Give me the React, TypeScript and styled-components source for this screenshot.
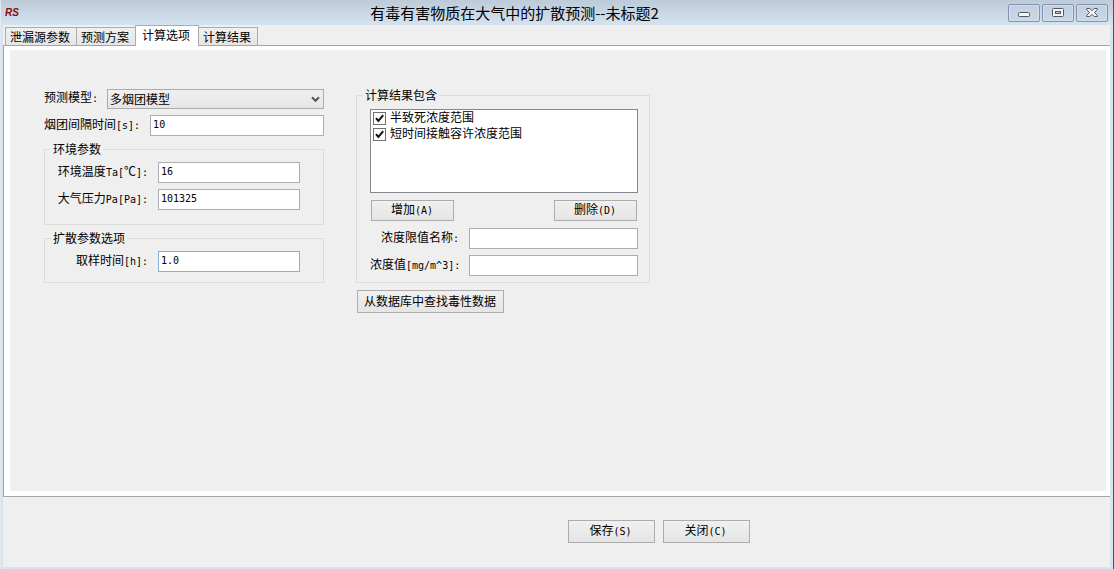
import React, { useState } from "react";
import styled, { createGlobalStyle } from "styled-components";

const GlobalStyle = createGlobalStyle`
  * { box-sizing: border-box; }
  body {
    margin: 0;
    color: #000;
    background: #efefef;
    font-family: "Noto Sans CJK SC", sans-serif;
    font-size: 12px;
    line-height: 14px;
  }
  button, input, select { font: inherit; color: inherit; margin: 0; }
`;

const Window = styled.div`
  display: flex;
  flex-direction: column;
  min-height: 100vh;
  background: #d6e4f1;
  border-right: 1px solid #505050;
  border-left: 1px solid #e4e9ef;
  padding: 0 3px 2px 2px;
`;

const TitleBar = styled.header`
  display: flex;
  align-items: center;
  height: 25px;
  margin: 0 -3px 0 -2px;
  padding: 0 5px 0 4px;
  background: linear-gradient(#bdcbd9, #d5e2f0);
`;

const Logo = styled.svg`
  display: block;
  width: 16px;
  height: 12px;
`;

const Title = styled.h1`
  flex: 1;
  margin: 0;
  font-size: 15px;
  line-height: 24px;
  font-weight: 400;
  text-align: center;
  white-space: nowrap;
`;

const Controls = styled.div`
  display: flex;
  gap: 2px;
`;

const ControlButton = styled.button`
  display: grid;
  place-items: center;
  width: 32px;
  height: 18px;
  padding: 0;
  border: 1px solid #8593b3;
  border-radius: 2px;
  background: linear-gradient(#c3d0df, #c9d7e6);
  box-shadow: inset 0 0 0 1px #d3dfec;
`;

const TabStrip = styled.div`
  display: flex;
  align-items: flex-end;
  height: 20px;
  padding-left: 2px;
  background: #efefef;
`;

const Tab = styled.button<{ $active: boolean }>`
  position: relative;
  height: ${(p) => (p.$active ? 21 : 18)}px;
  margin: 0 0 ${(p) => (p.$active ? -1 : 0)}px -1px;
  padding: ${(p) => (p.$active ? "0 8px 2px 6px" : "1px 6px 0 4px")};
  border: 1px solid #acacac;
  border-bottom: 0;
  background: ${(p) => (p.$active ? "#fff" : "linear-gradient(#f0f0f0, #e5e5e5)")};
  line-height: 16px;
  white-space: nowrap;
  z-index: ${(p) => (p.$active ? 1 : 0)};
  &:first-child { margin-left: 0; }
`;

const Panel = styled.main`
  display: flex;
  flex: 1;
  padding: 4px 4px 5px 6px;
  background: #fff;
  border: solid #a5a5a5;
  border-width: 1px 0 1px 1px;
`;

const Page = styled.div`
  display: flex;
  flex: 1;
  align-items: flex-start;
  gap: 32px;
  padding: 38px 34px;
  background: #efefef;
`;

const Column = styled.div<{ $width: number }>`
  display: flex;
  flex-direction: column;
  align-items: stretch;
  gap: 6px;
  width: ${(p) => p.$width}px;
`;

const Group = styled.fieldset`
  display: flex;
  flex-direction: column;
  gap: 6px;
  min-width: 0;
  margin: 0;
  padding: 6px;
  border: 1px solid #dcdcdc;
`;

const EnvironmentGroup = styled(Group)`
  padding-bottom: 14px;
`;

const DiffusionGroup = styled(Group)`
  padding-bottom: 10px;
`;

const Legend = styled.legend`
  padding: 0 2px;
  line-height: 14px;
`;

const Field = styled.div<{ $inset?: number }>`
  display: flex;
  align-items: center;
  gap: 10px;
  padding-right: ${(p) => p.$inset ?? 0}px;
`;

const ModelField = styled(Field)`
  gap: 9px;
  padding-top: 1px;
`;

const Label = styled.label<{ $width?: number }>`
  flex: none;
  width: ${(p) => (p.$width ? `${p.$width}px` : "auto")};
  padding-bottom: 2px;
  text-align: right;
  white-space: nowrap;
`;

const Latin = styled.span`
  font-family: "DejaVu Sans Mono", monospace;
  font-size: 10px;
`;

const TextInput = styled.input`
  flex: 1;
  min-width: 0;
  height: 21px;
  padding: 0 2px 2px;
  border: 1px solid #abadb3;
  border-radius: 0;
  outline: 0;
  background: #fff;
  font-family: "DejaVu Sans Mono", monospace;
  font-size: 10px;
  &[data-current] { border-color: #86afd9; }
`;

const SelectBox = styled.div`
  display: grid;
  flex: 1;
  align-items: center;
  > * { grid-area: 1 / 1; }
  > svg { justify-self: end; margin-right: 4px; pointer-events: none; }
`;

const Select = styled.select`
  appearance: none;
  width: 100%;
  height: 20px;
  padding: 0 20px 0 2px;
  border: 1px solid #acacac;
  border-radius: 0;
  background: linear-gradient(#f0f0f0, #e5e5e5);
`;

const CheckList = styled.ul`
  height: 84px;
  margin: 0;
  padding: 0 2px;
  border: 1px solid #828790;
  background: #fff;
  list-style: none;
`;

const CheckLabel = styled.label`
  display: flex;
  align-items: flex-start;
  gap: 4px;
  height: 16px;
  line-height: 14px;
`;

const CheckCell = styled.span`
  display: grid;
  margin-top: 2px;
  > * { grid-area: 1 / 1; }
  > svg { pointer-events: none; }
`;

const CheckInput = styled.input`
  appearance: none;
  width: 13px;
  height: 13px;
  border: 1px solid #707070;
  background: #fff;
  & + svg { visibility: hidden; }
  &:checked + svg { visibility: visible; }
`;

const ResultBody = styled.div`
  display: flex;
  flex-direction: column;
  gap: 7px;
  padding: 1px 5px 0 7px;
`;

const ButtonRow = styled.div`
  display: flex;
  justify-content: space-between;
  padding: 0 1px;
`;

const FieldStack = styled.div`
  display: flex;
  flex-direction: column;
  gap: 6px;
`;

const Button = styled.button<{ $size?: "small" | "large" | "wide" }>`
  width: ${(p) => (p.$size === "wide" ? 147 : p.$size === "large" ? 87 : 83)}px;
  height: ${(p) => (p.$size === "small" ? 21 : 23)}px;
  padding: 0 1px 1px 0;
  border: 1px solid #acacac;
  border-radius: 0;
  background: linear-gradient(#f0f0f0, #e5e5e5);
  white-space: nowrap;
`;

const LookupRow = styled.div`
  padding: 1px 1px 0;
`;

const Footer = styled.footer`
  display: flex;
  gap: 8px;
  padding: 23px 24px 24px 51%;
  background: #efefef;
`;

const tabs = ["泄漏源参数", "预测方案", "计算选项", "计算结果"];
const limits = ["半致死浓度范围", "短时间接触容许浓度范围"];

export default function App() {
  const [active, setActive] = useState(2);
  return (
    <>
      <GlobalStyle />
      <Window>
        <TitleBar>
          <Logo viewBox="0 0 16 12" aria-hidden="true">
            <text x="0" y="9" fill="#8b0a12" fontFamily="Liberation Sans, sans-serif" fontSize="10" fontWeight="700" fontStyle="italic">RS</text>
          </Logo>
          <Title>有毒有害物质在大气中的扩散预测--未标题2</Title>
          <Controls>
            <ControlButton aria-label="最小化">
              <svg width="12" height="10" viewBox="0 0 12 10">
                <rect x="0.5" y="4.5" width="11" height="4" rx="1" fill="#f4f4f4" stroke="#535666" />
              </svg>
            </ControlButton>
            <ControlButton aria-label="最大化">
              <svg width="12" height="10" viewBox="0 0 12 10">
                <rect x="0.5" y="0.5" width="11" height="8" rx="1" fill="#f4f4f4" stroke="#535666" />
                <rect x="3.5" y="3.5" width="5" height="2" fill="#b9c8da" stroke="#535666" />
              </svg>
            </ControlButton>
            <ControlButton aria-label="关闭">
              <svg width="12" height="10" viewBox="0 0 12 10">
                <path d="M.7.5h3.1L6 2.7 8.2.5h3.1v1.2L8.4 4.5l2.9 2.8v1.2H8.2L6 6.3 3.8 8.5H.7V7.3l2.9-2.8L.7 1.7z" fill="#f4f4f4" stroke="#535666" />
              </svg>
            </ControlButton>
          </Controls>
        </TitleBar>

        <TabStrip role="tablist">
          {tabs.map((name, i) => (
            <Tab key={name} role="tab" aria-selected={i === active} $active={i === active} onClick={() => setActive(i)}>
              {name}
            </Tab>
          ))}
        </TabStrip>

        <Panel>
          <Page>
            <Column $width={280}>
              <ModelField>
                <Label htmlFor="model">预测模型<Latin>:</Latin></Label>
                <SelectBox>
                  <Select id="model" defaultValue="puff">
                    <option value="puff">多烟团模型</option>
                  </Select>
                  <svg width="9" height="7" viewBox="0 0 9 7">
                    <path d="M1 1.2 4.5 4.8 8 1.2" fill="none" stroke="#555" strokeWidth="2" />
                  </svg>
                </SelectBox>
              </ModelField>
              <Field>
                <Label htmlFor="interval">烟团间隔时间<Latin>[s]:</Latin></Label>
                <TextInput id="interval" defaultValue="10" />
              </Field>

              <EnvironmentGroup>
                <Legend>环境参数</Legend>
                <Field $inset={17}>
                  <Label htmlFor="temp" $width={97}>
                    环境温度<Latin>Ta[</Latin>℃<Latin>]:</Latin>
                  </Label>
                  <TextInput id="temp" defaultValue="16" />
                </Field>
                <Field $inset={17}>
                  <Label htmlFor="pressure" $width={97}>大气压力<Latin>Pa[Pa]:</Latin></Label>
                  <TextInput id="pressure" defaultValue="101325" />
                </Field>
              </EnvironmentGroup>

              <DiffusionGroup>
                <Legend>扩散参数选项</Legend>
                <Field $inset={17}>
                  <Label htmlFor="sampling" $width={97}>取样时间<Latin>[h]:</Latin></Label>
                  <TextInput id="sampling" defaultValue="1.0" data-current />
                </Field>
              </DiffusionGroup>
            </Column>

            <Column $width={294}>
              <Group>
                <Legend>计算结果包含</Legend>
                <ResultBody>
                  <CheckList>
                    {limits.map((name) => (
                      <li key={name}>
                        <CheckLabel>
                          <CheckCell>
                            <CheckInput type="checkbox" defaultChecked />
                            <svg width="13" height="13" viewBox="0 0 13 13">
                              <path d="M3 6.2 5.4 9 10.2 3.2" fill="none" stroke="#111" strokeWidth="2" />
                            </svg>
                          </CheckCell>
                          {name}
                        </CheckLabel>
                      </li>
                    ))}
                  </CheckList>
                  <ButtonRow>
                    <Button $size="small">增加<Latin>(A)</Latin></Button>
                    <Button $size="small">删除<Latin>(D)</Latin></Button>
                  </ButtonRow>
                  <FieldStack>
                    <Field>
                      <Label htmlFor="limit-name" $width={89}>浓度限值名称<Latin>:</Latin></Label>
                      <TextInput id="limit-name" />
                    </Field>
                    <Field>
                      <Label htmlFor="limit-value" $width={89}>浓度值<Latin>[mg/m^3]:</Latin></Label>
                      <TextInput id="limit-value" />
                    </Field>
                  </FieldStack>
                </ResultBody>
              </Group>
              <LookupRow>
                <Button $size="wide">从数据库中查找毒性数据</Button>
              </LookupRow>
            </Column>
          </Page>
        </Panel>

        <Footer>
          <Button $size="large">保存<Latin>(S)</Latin></Button>
          <Button $size="large">关闭<Latin>(C)</Latin></Button>
        </Footer>
      </Window>
    </>
  );
}
